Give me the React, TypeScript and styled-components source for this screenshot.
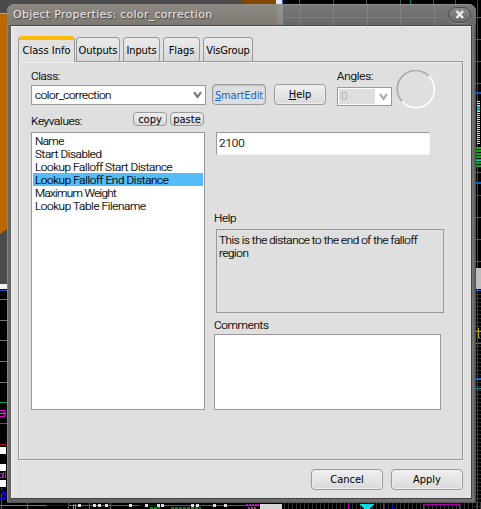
import React from "react";
import styled, { createGlobalStyle } from "styled-components";

const Global = createGlobalStyle`
  * { box-sizing: border-box; }
  body { margin: 0; background: #000; overflow: hidden; }
  button, input, textarea { font: inherit; color: inherit; margin: 0; outline: 0; }
`;

const Desktop = styled.div`
  position: relative;
  width: 481px;
  height: 509px;
  padding: 4px 0 0 7px;
  overflow: hidden;
  background: #000;
  color: #000;
  font: 300 11.7px/13px "Roboto", "Liberation Sans", sans-serif;
`;

const Scene = styled.svg`
  position: absolute;
  inset: 0;
`;

const Dialog = styled.section`
  position: relative;
  display: flex;
  flex-direction: column;
  width: 469px;
  height: 499px;
  padding: 0 4px 4px;
  border-radius: 8px 8px 2px 2px;
  background: linear-gradient(90deg, #707070, #626262 3px, #707070 464px, #777 466px, #484848);
  box-shadow: inset 0 1px #8b8b8b, inset 1px 0 #858585, inset 0 -1px #555;
`;

const TitleBar = styled.header`
  display: flex;
  align-items: center;
  justify-content: space-between;
  height: 23px;
  margin: 0 -4px;
  padding: 0 5px 0 6px;
  border-radius: 8px 8px 0 0;
  box-shadow: inset 0 1px #8f8c88;
  background:
    linear-gradient(rgba(255,255,255,.06), rgba(0,0,0,.06)),
    linear-gradient(90deg, #87817b 0 270px, #8e8e8e 270px 276px, #707070 276px);
`;

const Title = styled.h1`
  margin: 1px 0 0;
  color: #e9e9e9;
  font: 11px/14px "DejaVu Sans", sans-serif;
  letter-spacing: 0.27px;
  text-shadow: 1px 1px 1px #444;
`;

const CloseButton = styled.button`
  display: grid;
  place-items: center;
  width: 23px;
  height: 16px;
  padding: 0;
  border: 1px solid #4b4b4b;
  border-radius: 8px;
  background: linear-gradient(#8a8a8a, #686868);
  box-shadow: 0 1px #8b8b8b;
`;

const Client = styled.main`
  display: flex;
  flex-direction: column;
  flex: 1;
  padding: 10px 8px 8px 7px;
  border: solid #444;
  border-width: 1px 1px 1px 0;
  background: linear-gradient(90deg, #e5e5e5 0, #e0e0e0 9px);
  box-shadow: inset 1px 1px #f0f0f0;
`;

const TabBar = styled.nav`
  display: flex;
  align-items: flex-end;
  height: 25px;
  position: relative;
`;

const Tab = styled.button<{ $active?: boolean; $w: number; $gap?: number; $ls?: number }>`
  width: ${p => p.$w}px;
  height: ${p => (p.$active ? 26 : 24)}px;
  margin: 0 ${p => p.$gap ?? 0}px ${p => (p.$active ? -1 : 0)}px 0;
  padding: ${p => (p.$active ? "0 0 1px" : "2px 0 0")};
  border: 1px solid #999;
  border-top: ${p => (p.$active ? "4px solid #ffbc00" : "1px solid #999")};
  border-bottom: 0;
  border-radius: 4px 4px 0 0;
  background: ${p => (p.$active ? "#e1e1e1" : "linear-gradient(#ebebeb, #d6d6d6)")};
  font: 11px/14px "DejaVu Sans Condensed", "DejaVu Sans", sans-serif;
  font-stretch: condensed;
  letter-spacing: ${p => p.$ls ?? 0}px;
  white-space: nowrap;
  display: flex;
  align-items: center;
  justify-content: center;
`;

const Panel = styled.section`
  height: 399px;
  padding: 8px 18px 0 12px;
  border: 1px solid #999;
  background: #dfdfdf;
  box-shadow: inset 1px 1px #ededed, 1px 1px #ececec;
  -webkit-text-stroke: 0.2px;
`;

const Columns = styled.div`
  display: grid;
  grid-template-columns: 175px 1fr;
`;

const Column = styled.div<{ $pad?: number }>`
  display: flex;
  flex-direction: column;
  padding-left: ${p => p.$pad ?? 0}px;
`;

const Label = styled.label<{ $mt?: number; $ls?: number }>`
  display: block;
  height: 13px;
  margin-top: ${p => p.$mt ?? 0}px;
  letter-spacing: ${p => p.$ls ?? -0.3}px;
  white-space: nowrap;
`;

const Select = styled.div<{ $disabled?: boolean; $w: number; $h: number; $mt: number }>`
  display: flex;
  align-items: center;
  justify-content: space-between;
  width: ${p => p.$w}px;
  height: ${p => p.$h}px;
  margin-top: ${p => p.$mt}px;
  padding: ${p => (p.$disabled ? "1px 3px 1px 1px" : "0 3px")};
  border: 1px solid #999;
  background: #fff;
  color: ${p => (p.$disabled ? "#aaa" : "#000")};
`;

const SelectValue = styled.span<{ $disabled?: boolean }>`
  width: ${p => (p.$disabled ? "36px" : "auto")};
  height: 15px;
  line-height: 15px;
  padding-left: ${p => (p.$disabled ? 2 : 0)}px;
  background: ${p => (p.$disabled ? "#dedede" : "transparent")};
  letter-spacing: -0.4px;
`;

const KeyHeader = styled.div`
  display: flex;
  align-items: flex-start;
  gap: 3px;
  height: 20px;
  margin-top: 7px;
  padding-right: 2px;
`;

const MiniButton = styled.button`
  width: 34px;
  height: 14px;
  padding: 0;
  border: 1px solid #999;
  border-radius: 4px;
  background: linear-gradient(#eee, #d8d8d8);
  font: 11px/11px "DejaVu Sans Condensed", "DejaVu Sans", sans-serif;
  font-stretch: condensed;
  -webkit-text-stroke: 0;
`;

const KeyLabel = styled(Label)`
  flex: 1;
`;

const PropertyList = styled.ul`
  width: 174px;
  height: 278px;
  margin: 0;
  padding: 1px;
  list-style: none;
  border: 1px solid #999;
  background: #fff;
`;

const Property = styled.li<{ $selected?: boolean; $ls: number }>`
  height: 13px;
  padding-left: 2px;
  line-height: 14px;
  letter-spacing: ${p => p.$ls}px;
  white-space: nowrap;
  background: ${p => (p.$selected ? "#55bcf8" : "transparent")};
`;

const Actions = styled.div`
  display: flex;
  height: 62px;
`;

const Button = styled.button<{ $w: number; $checked?: boolean; $mt?: number; $gap?: number; $ls?: number }>`
  width: ${p => p.$w}px;
  height: 21px;
  margin: ${p => p.$mt ?? 0}px ${p => p.$gap ?? 0}px 0 0;
  padding: ${p => (p.$checked ? "2px 0 0" : "1px 0 0")};
  border: 1px solid #999;
  border-radius: 4px;
  background: ${p => (p.$checked ? "#dcdfe2" : "linear-gradient(#f0f0f0, #d9d9d9)")};
  color: ${p => (p.$checked ? "#1264cc" : "#000")};
  box-shadow: ${p => (p.$checked ? "inset 0 1px 2px #bbb" : "inset 0 0 0 1px #eee")};
  font: 11px/14px "DejaVu Sans Condensed", "DejaVu Sans", sans-serif;
  font-stretch: condensed;
  letter-spacing: ${p => p.$ls ?? 0}px;
  -webkit-text-stroke: 0;
`;

const AngleField = styled.div`
  width: 59px;
`;

const ValueInput = styled.input`
  width: 214px;
  height: 23px;
  margin-left: 4px;
  padding: 0 2px 2px;
  border: 1px solid #f3f3f3;
  border-top-color: #999;
  border-left-color: #999;
  background: #fff;
  letter-spacing: -0.1px;
`;

const HelpBox = styled.p`
  width: 228px;
  height: 84px;
  margin: 4px 0 0 4px;
  padding: 4px 2px;
  border: 1px solid #999;
  letter-spacing: -0.42px;
  white-space: nowrap;
`;

const Comments = styled.textarea`
  width: 227px;
  height: 76px;
  margin: 2px 0 0 2px;
  border: 1px solid #999;
  background: #fff;
  resize: none;
`;

const Footer = styled.footer`
  display: flex;
  justify-content: flex-end;
  gap: 8px;
  padding-top: 9px;
`;

const properties = [
  { name: "Name", ls: -0.6 },
  { name: "Start Disabled", ls: -0.38 },
  { name: "Lookup Falloff Start Distance", ls: -0.38 },
  { name: "Lookup Falloff End Distance", ls: -0.35 },
  { name: "Maximum Weight", ls: -0.65 },
  { name: "Lookup Table Filename", ls: -0.35 },
];

const Chevron = ({ color }: { color: string }) => (
  <svg width="9" height="8" viewBox="0 0 9 8">
    <path d="M1 1.2 4.5 6 8 1.2" fill="none" stroke={color} strokeWidth="2.2" />
  </svg>
);

const Dial = () => (
  <svg width="40" height="40" viewBox="0 0 40 40">
    <circle cx="20" cy="19.3" r="18.4" fill="none" stroke="#fff" strokeWidth="1.6" />
    <path d="M6 31.3A18.4 18.4 0 0 1 32.5 5.8" fill="none" stroke="#aaa" strokeWidth="1.8" />
    <rect x="20" y="19" width="1" height="1" fill="#fff" />
  </svg>
);

const range = (n: number) => Array.from({ length: n }, (_, i) => i);

const Viewports = () => (
  <Scene width="481" height="509" shapeRendering="crispEdges">
    <rect width="276" height="285" fill="#4b4b4b" />
    <path d="M0 13H12V225L0 234Z" fill="#bd6700" />
    <path d="M0 13H8" stroke="#aaa" />
    <path d="M242 0H276V4H242Z" fill="#854600" />
    <rect x="276" width="6" height="6" fill="#e5e5ef" />
    <rect x="282" width="1" height="6" fill="#1260cc" />
    <path d="M299.5 0V5M333.5 0V5M366.5 0V5M400.5 0V5M433.5 0V5M455.5 0V5" stroke="#555" />
    <path d="M410.5 0V5" stroke="#008c75" />
    <path d="M477.5 0V509" stroke="#444" />
    <path d="M473 17.5H481" stroke="#7a4d32" />
    <path d="M473 39.5H481M473 61.5H481M473 83.5H481M473 172.5H481M473 217.5H481M473 239.5H481M473 261.5H481" stroke="#555" />
    <rect x="475" y="92" width="6" height="2" fill="#0b57bc" />
    {range(22).map(i => <rect key={i} x="477" y={101 + i * 2} width="3" height="1" fill="#ddd" />)}
    <path d="M477 106H480V111H477Z" fill="#08a9a9" />
    {range(7).map(i => <rect key={i} x="476" y={147 + i * 3} width="5" height="2" fill="#12a512" />)}
    <path d="M476 160.5H481" stroke="#00cccc" />
    <rect x="476" y="182" width="5" height="2" fill="#075fcc" />
    <path d="M476 195.5H481" stroke="#075d60" />
    <rect x="474" y="268" width="7" height="21" fill="#bdbdbd" />
    <rect x="474" y="290" width="7" height="1" fill="#0b60cc" />
    {range(54).map(i => <rect key={i} x="474" y={294 + i * 4} width="7" height="1" fill="#333" />)}
    <path d="M478 328V336Q478 338 480 337M476 331H481" fill="none" stroke="#bda000" />
    <path d="M475 343.5H481" stroke="#008f60" />
    <rect x="475" y="378" width="6" height="2" fill="#0865d2" />
    <path d="M475 388.5H481" stroke="#00929e" />

    <rect y="284" width="9" height="5" fill="#f1f1f1" />
    <rect y="289" width="9" height="220" fill="#000" />
    <rect y="290" width="9" height="1" fill="#1059ba" />
    <path d="M0 299.5H9M0 320.5H9M0 340.5H9M0 361.5H9M0 382.5H9" stroke="#777" />
    <path d="M0 402.5H9" stroke="#00a965" />
    <path d="M0 413.5H6" stroke="#00bbba" />
    <path d="M0 410H4V416H0M0 423.5H7" fill="none" stroke="#d900d9" />
    <path d="M0 444.5H7" stroke="#a00b13" />
    <path d="M0 447H6V454H0ZM0 464H6V471H0ZM0 480H6V487H0Z" fill="#fff" />
    <path d="M0 473H2V477H0M3 472V478M5 472V478M1 488L3 490M1 494V509" fill="none" stroke="#d500d5" />
    <path d="M1 493H5V499H0" fill="none" stroke="#0000fb" strokeWidth="2" />

    <path d="M0 505.5H260" stroke="#777" />
    <path d="M27.5 503V509M68.5 503V509M89.5 503V509M110.5 503V509" stroke="#666" />
    <path d="M47 505.5H69M139 505.5H163" stroke="#0000d8" />
    <path d="M78 505.5H139M165 505.5H260" stroke="#00a000" />
    <path d="M73.5 504V509M75.5 504V509" stroke="#00c9ce" />
    {[78, 93, 98, 105, 129, 145, 157, 161, 191, 196, 213, 224].map(x => (
      <rect key={x} x={x} y="504" width="3" height="3" fill="#ddd" />
    ))}
    <path d="M150 508H160M171 508H201" stroke="#008d00" strokeWidth="2" strokeDasharray="3 1" />
    <path d="M246 505H259M248 508H257" stroke="#c613c6" strokeWidth="2" strokeDasharray="2 1" />
    <rect x="260" y="504" width="22" height="5" fill="#d5d5d5" />
    {range(50).map(i => <rect key={i} x={284 + i * 4} y="503" width="1" height="6" fill="#333" />)}
    <path d="M348.5 503V509M383.5 503V509M423 509V504.5H459V509" fill="none" stroke="#b000b0" />
    <path d="M392.5 506V509" stroke="#0000ee" />
    <path d="M360 504H374L369 509H364Z" fill="#00dcdf" />
  </Scene>
);

const TitleGrid = styled.svg`
  position: absolute;
  top: 0;
  left: 276px;
  pointer-events: none;
`;

export default function App() {
  return (
    <Desktop>
      <Global />
      <Viewports />
      <Dialog>
        <TitleBar>
          <Title>Object Properties: color_correction</Title>
          <CloseButton aria-label="Close">
            <svg width="10" height="9" viewBox="0 0 10 9">
              <path d="M1.5 1 8 8M8 1 1.5 8" stroke="#eee" strokeWidth="2.4" />
            </svg>
          </CloseButton>
        </TitleBar>
        <TitleGrid width="165" height="23">
          <path d="M17.5 0V23M50.5 0V23M84.5 0V23M117.5 0V23M151.5 0V23M0 13.5H163" stroke="#999" strokeOpacity=".4" />
        </TitleGrid>
        <Client>
          <TabBar>
            <Tab $active $w={57} $gap={1}>Class Info</Tab>
            <Tab $w={44} $gap={3} $ls={-0.1}>Outputs</Tab>
            <Tab $w={37} $gap={3} $ls={-0.1}>Inputs</Tab>
            <Tab $w={37} $gap={3} $ls={-0.1}>Flags</Tab>
            <Tab $w={50} $ls={-0.15}>VisGroup</Tab>
          </TabBar>
          <Panel>
            <Columns>
              <Column>
                <Label>Class:</Label>
                <Select $w={175} $h={20} $mt={2}>
                  <SelectValue>color_correction</SelectValue>
                  <Chevron color="#777" />
                </Select>
                <KeyHeader>
                  <KeyLabel $mt={3}>Keyvalues:</KeyLabel>
                  <MiniButton>copy</MiniButton>
                  <MiniButton>paste</MiniButton>
                </KeyHeader>
                <PropertyList>
                  {properties.map((p, i) => (
                    <Property key={p.name} $selected={i === 3} $ls={p.ls}>{p.name}</Property>
                  ))}
                </PropertyList>
              </Column>
              <Column $pad={6}>
                <Actions>
                  <Button $w={54} $mt={14} $gap={8} $checked $ls={-0.1}><u>S</u>martEdit</Button>
                  <Button $w={52} $mt={14} $gap={11}><u>H</u>elp</Button>
                  <AngleField>
                    <Label $ls={-0.15}>Angles:</Label>
                    <Select $disabled $w={55} $h={19} $mt={4}>
                      <SelectValue $disabled>0</SelectValue>
                      <Chevron color="#aaa" />
                    </Select>
                  </AngleField>
                  <Dial />
                </Actions>
                <ValueInput defaultValue="2100" />
                <Column $pad={2}>
                  <Label $mt={57}>Help</Label>
                </Column>
                <HelpBox>This is the distance to the end of the falloff<br />region</HelpBox>
                <Column $pad={2}>
                  <Label $mt={6}>Comments</Label>
                </Column>
                <Comments />
              </Column>
            </Columns>
          </Panel>
          <Footer>
            <Button $w={72}>Cancel</Button>
            <Button $w={72}>Apply</Button>
          </Footer>
        </Client>
      </Dialog>
    </Desktop>
  );
}
